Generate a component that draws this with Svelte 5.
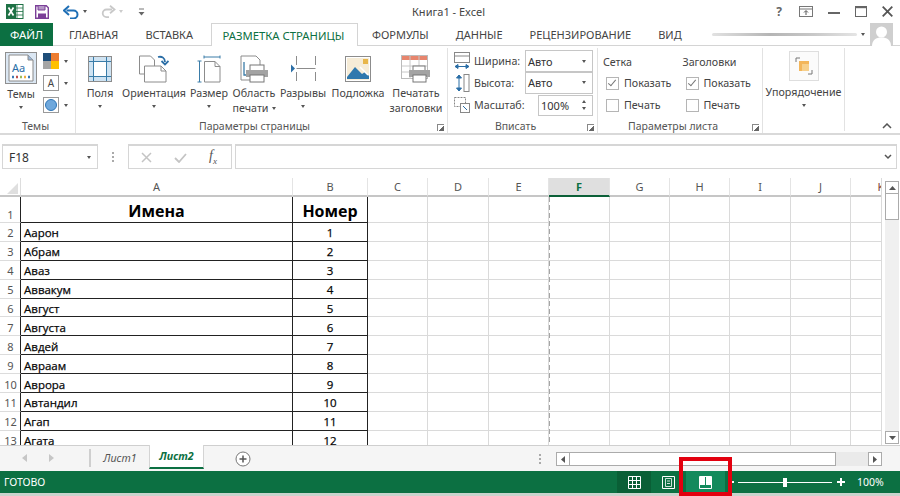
<script>
  const tabs = ['ГЛАВНАЯ', 'ВСТАВКА', 'РАЗМЕТКА СТРАНИЦЫ', 'ФОРМУЛЫ', 'ДАННЫЕ', 'РЕЦЕНЗИРОВАНИЕ', 'ВИД'];
  const pageItems = [
    { id: 'margins', w: 44, lines: ['Поля'], caret: 'below' },
    { id: 'orient', w: 64, lines: ['Ориентация'], caret: 'below' },
    { id: 'size', w: 46, lines: ['Размер'], caret: 'below' },
    { id: 'area', w: 44, lines: ['Область', 'печати'], caret: 'inline' },
    { id: 'breaks', w: 54, lines: ['Разрывы'], caret: 'below' },
    { id: 'bg', w: 56, lines: ['Подложка'], caret: '' },
    { id: 'titles', w: 60, lines: ['Печатать', 'заголовки'], caret: '' }
  ];
  const cols = ['A', 'B', 'C', 'D', 'E', 'F', 'G', 'H', 'I', 'J', 'K'];
  const names = ['Аарон', 'Абрам', 'Аваз', 'Аввакум', 'Август', 'Августа', 'Авдей', 'Авраам', 'Аврора', 'Автандил', 'Агап', 'Агата'];
  const emptyCols = cols.slice(2);
</script>

<div class="app">
  <header class="titlebar">
    <div class="qat">
      <svg class="q-excel" width="18" height="17" viewBox="0 0 18 17"><rect x="7" y="1.500" width="10" height="14" fill="#fff" stroke="#1e7145"/><path d="M11 2v13M7 5h10M7 8.500h10M7 12h10" stroke="#1e7145" stroke-width=".8"/><rect x="0" y="1" width="10" height="15" fill="#1e7145"/><path d="M2.500 4.500l5 8M7.500 4.500l-5 8" stroke="#fff" stroke-width="1.700"/></svg>
      <svg class="q-save" width="14" height="14" viewBox="0 0 14 14"><path d="M.7.700h10.600l2 2v10.600H.7z" fill="#fff" stroke="#7b3f98" stroke-width="1.400"/><path d="M3 1v4h7V1" fill="#b497c6" stroke="#7b3f98"/><rect x="3" y="8.500" width="8" height="4.500" fill="#7b3f98"/></svg>
      <svg class="q-undo" width="17" height="14" viewBox="0 0 17 14"><path d="M3.500 5.500h7a4 4 0 0 1 0 8H7" fill="none" stroke="#1f6fb5" stroke-width="2"/><path d="M6 1L1 5.500 6 10" fill="none" stroke="#1f6fb5" stroke-width="2"/></svg>
      <span class="caret q-c1"></span>
      <svg class="q-redo" width="15" height="13" viewBox="0 0 15 13"><path d="M11 4.500H5.500a3.800 3.800 0 0 0 0 7.600H8" fill="none" stroke="#c9c9c9" stroke-width="1.800"/><path d="M9 .8l4.500 3.700L9 8.200" fill="none" stroke="#c9c9c9" stroke-width="1.800"/></svg>
      <span class="caret light q-c2"></span>
      <svg class="q-more" width="7" height="8" viewBox="0 0 7 8"><path d="M1 1h5" stroke="#777"/><path d="M.5 4h6L3.500 7.500z" fill="#666"/></svg>
    </div>
    <div class="doc-title">Книга1 - Excel</div>
    <div class="winbtns">
      <span class="help">?</span>
      <svg width="14" height="11" viewBox="0 0 14 11"><rect x=".5" y=".5" width="13" height="10" fill="#fff" stroke="#777"/><path d="M.5 3h13" stroke="#777"/><path d="M7 9V5M5 6.500L7 4.500l2 2" fill="none" stroke="#555"/></svg>
      <svg width="12" height="11" viewBox="0 0 12 11"><path d="M0 7h12" stroke="#666" stroke-width="2"/></svg>
      <svg width="12" height="11" viewBox="0 0 12 11"><rect x=".5" y=".5" width="11" height="10" fill="none" stroke="#666"/><path d="M0 1.200h12" stroke="#666" stroke-width="2"/></svg>
      <svg width="11" height="11" viewBox="0 0 11 11"><path d="M.7.700l9.600 9.600M10.300.700L.7 10.300" stroke="#555" stroke-width="1.800"/></svg>
    </div>
  </header>

  <nav class="tabs">
    <div class="file">ФАЙЛ</div>
    <div class="tablist">
      {#each tabs as t, i}
        <div class="tab" class:active={i === 2}>{t}</div>
      {/each}
    </div>
    <div class="account">
      <span class="smudge"></span>
      <span class="caret"></span>
      <svg class="avatar" width="23" height="23" viewBox="0 0 23 23"><rect width="23" height="23" fill="#cfcfcf"/><circle cx="11.500" cy="9" r="5.500" fill="#fff"/><path d="M2 23c0-6 4-8.500 9.500-8.500S21 17 21 23z" fill="#fff"/></svg>
    </div>
  </nav>

  <section class="ribbon">
    <div class="group g-themes">
      <div class="g-body themes-body">
        <div class="themes-main">
          <div class="theme-box">
            <svg width="28" height="28" viewBox="0 0 28 28"><path d="M2 1h19l5 5v21H2z" fill="#fff" stroke="#8a8a8a"/><path d="M21 1v5h5" fill="#9bb7d8" stroke="#8a8a8a"/><text x="5" y="18" class="aa">Aa</text><path d="M5 23h2" stroke="#3b78b5" stroke-width="2.500"/><path d="M9 23h2" stroke="#c0504d" stroke-width="2.500"/><path d="M13 23h2" stroke="#9bbb59" stroke-width="2.500"/><path d="M17 23h2" stroke="#f0ad3c" stroke-width="2.500"/><path d="M21 23h2" stroke="#3b78b5" stroke-width="2.500"/></svg>
          </div>
          <span class="lbl">Темы</span>
          <span class="caret under"></span>
        </div>
        <div class="themes-side">
          <div class="side"><svg width="16" height="16" viewBox="0 0 16 16"><rect width="8" height="8" fill="#1f4e79"/><rect x="8" width="8" height="8" fill="#ed7d31"/><rect y="8" width="8" height="8" fill="#a5a5a5"/><rect x="8" y="8" width="8" height="8" fill="#ffc000"/></svg><span class="caret"></span></div>
          <div class="side"><span class="font-a">A</span><span class="caret"></span></div>
          <div class="side"><svg width="16" height="16" viewBox="0 0 16 16"><rect x=".5" y=".5" width="15" height="15" fill="#fff" stroke="#9a9a9a"/><circle cx="8" cy="8" r="5.500" fill="#6fa8dc" stroke="#2e75b6"/></svg><span class="caret"></span></div>
        </div>
      </div>
      <div class="g-label short">Темы</div>
    </div>

    <div class="group g-page">
      <div class="g-body page-body">
        {#each pageItems as it}
          <div class="big" style="width:{it.w}px">
            <div class="big-ico">
              {#if it.id === 'margins'}
                <svg width="24" height="26" viewBox="0 0 24 26"><rect x=".5" y=".5" width="23" height="25" fill="#fff" stroke="#8c8c8c"/><rect x="1" y="1" width="4" height="24" fill="#cfe3f2"/><rect x="19" y="1" width="4" height="24" fill="#cfe3f2"/><rect x="1" y="1" width="22" height="4" fill="#cfe3f2"/><rect x="1" y="21" width="22" height="4" fill="#cfe3f2"/><path d="M5.500 1v24M18.500 1v24M1 5.500h22M1 20.500h22" stroke="#3a7ca8"/></svg>
              {:else if it.id === 'orient'}
                <svg width="30" height="28" viewBox="0 0 30 28"><path d="M.5 1h11l4 4v14H.5z" fill="#fff" stroke="#8c8c8c"/><path d="M5.500 11H22l5 5v11H5.500z" fill="#fff" stroke="#8c8c8c"/><path d="M22 11v5h5" fill="none" stroke="#8c8c8c"/><path d="M19 2c4-1 7 1 7 5" fill="none" stroke="#2b6ea6" stroke-width="1.800"/><path d="M22.500 6l3.500 3.500L29.500 6" fill="none" stroke="#2b6ea6" stroke-width="1.800"/></svg>
              {:else if it.id === 'size'}
                <svg width="24" height="28" viewBox="0 0 24 28"><path d="M7 .5v3M23 .5v3M7 2h16" stroke="#3a7ca8"/><path d="M.5 6h4M.5 27h4M2.500 6v21" stroke="#3a7ca8"/><path d="M7.500 6.500H18l5 5v15.500H7.500z" fill="#fff" stroke="#8c8c8c"/><path d="M18 6.500v5h5" fill="none" stroke="#8c8c8c"/></svg>
              {:else if it.id === 'area'}
                <svg width="30" height="28" viewBox="0 0 30 28"><path d="M2 1h15l4 4v20H2z" fill="#fff" stroke="#8c8c8c"/><path d="M5 7v13h3" fill="none" stroke="#3a7ca8" stroke-width="1.300"/><rect x="11" y="10" width="14" height="6" fill="#fff" stroke="#777"/><rect x="7" y="15" width="22" height="7" fill="#a3a3a3"/><rect x="11" y="20" width="14" height="7" fill="#fff" stroke="#777"/></svg>
              {:else if it.id === 'breaks'}
                <svg width="26" height="27" viewBox="0 0 26 27"><path d="M6.500 1v9M6.500 17v9M25.500 1v9M25.500 17v9M6.500 13.500h19" fill="none" stroke="#8c8c8c"/><path d="M1 9.500l4 4-4 4z" fill="#2b6ea6"/></svg>
              {:else if it.id === 'bg'}
                <svg width="26" height="26" viewBox="0 0 26 26"><rect x=".5" y=".5" width="25" height="25" fill="#fff" stroke="#8c8c8c"/><rect x="2" y="2" width="22" height="22" fill="#f6ecd7"/><rect x="18" y="3" width="5" height="5" fill="#e8b64a"/><path d="M2 21l8-10 7 7 3-2 4 4v3H2z" fill="#2f78ad"/><path d="M15 11l8 8" stroke="#fff" stroke-width="1.500"/></svg>
              {:else}
                <svg width="30" height="28" viewBox="0 0 30 28"><rect x=".5" y=".5" width="26" height="23" fill="#fff" stroke="#bbb"/><rect x="1" y="1" width="25" height="4" fill="#e7856d"/><path d="M1 11h25M1 17h25M9 1v23M18 1v23" stroke="#c8c8c8"/><rect x="12" y="11" width="12" height="6" fill="#fff" stroke="#777"/><rect x="8" y="15" width="21" height="7" fill="#a3a3a3"/><rect x="12" y="20" width="13" height="7" fill="#fff" stroke="#777"/></svg>
              {/if}
            </div>
            <span class="lbl">{it.lines[0]}</span>
            {#if it.lines[1]}
              <span class="lbl second">{it.lines[1]}{#if it.caret === 'inline'}<span class="caret inline"></span>{/if}</span>
            {/if}
            {#if it.caret === 'below'}<span class="caret under"></span>{/if}
          </div>
        {/each}
      </div>
      <div class="g-label">Параметры страницы<i class="launcher"></i></div>
    </div>

    <div class="group g-fit">
      <div class="g-body fit-body">
        <div class="fit-row">
          <svg width="16" height="18" viewBox="0 0 16 18"><rect x=".5" y=".5" width="15" height="10" fill="#fff" stroke="#888"/><path d="M.5 4h15" stroke="#888"/><path d="M1 14.500h14M1 14.500l3-2v4zM15 14.500l-3-2v4z" fill="#2b6ea6" stroke="#2b6ea6"/></svg>
          <span class="fit-lbl">Ширина:</span>
          <div class="select">Авто<span class="caret"></span></div>
        </div>
        <div class="fit-row">
          <svg width="16" height="18" viewBox="0 0 16 18"><path d="M5 1v16M5 1L2.500 4h5zM5 17l-2.500-3h5z" fill="#2b6ea6" stroke="#2b6ea6"/><rect x="10" y=".5" width="5" height="17" fill="#fff" stroke="#888"/></svg>
          <span class="fit-lbl">Высота:</span>
          <div class="select">Авто<span class="caret"></span></div>
        </div>
        <div class="fit-row">
          <svg width="16" height="16" viewBox="0 0 16 16"><rect x=".5" y=".5" width="11" height="9" fill="#fff" stroke="#888" stroke-dasharray="2 1"/><rect x="6.500" y="6.500" width="9" height="9" fill="#fff" stroke="#888"/><path d="M9 9l4 4" stroke="#2b6ea6"/></svg>
          <span class="fit-lbl">Масштаб:</span>
          <div class="spin">100%<span class="arrows"><span class="up"></span><span class="caret"></span></span></div>
        </div>
      </div>
      <div class="g-label">Вписать<i class="launcher"></i></div>
    </div>

    <div class="group g-sheet">
      <div class="g-body sheet-body">
        <div class="opt-col">
          <div class="opt-title">Сетка</div>
          <div class="opt"><span class="check on"></span>Показать</div>
          <div class="opt"><span class="check"></span>Печать</div>
        </div>
        <div class="opt-col">
          <div class="opt-title">Заголовки</div>
          <div class="opt"><span class="check on"></span>Показать</div>
          <div class="opt"><span class="check"></span>Печать</div>
        </div>
      </div>
      <div class="g-label">Параметры листа<i class="launcher"></i></div>
    </div>

    <div class="group g-arrange">
      <div class="arrange-ico">
        <svg width="18" height="18" viewBox="0 0 18 18"><path d="M1 5V1h4M13 17h4v-4" fill="none" stroke="#777"/><rect x="4" y="4" width="10" height="10" fill="#f3b65b"/><rect x="7" y="7" width="7" height="7" fill="#f7d08c"/></svg>
      </div>
      <span class="lbl">Упорядочение</span>
      <span class="caret under"></span>
    </div>

    <svg class="collapse" width="10" height="6" viewBox="0 0 10 6"><path d="M1 5l4-4 4 4" fill="none" stroke="#555" stroke-width="1.500"/></svg>
  </section>

  <section class="fxbar">
    <div class="namebox">F18<span class="caret"></span></div>
    <span class="vdots"></span>
    <div class="fxbtns">
      <svg width="11" height="11" viewBox="0 0 11 11"><path d="M1 1l9 9M10 1l-9 9" stroke="#c4c4c4" stroke-width="1.500"/></svg>
      <svg width="13" height="11" viewBox="0 0 13 11"><path d="M1 6l4 4 7-8" fill="none" stroke="#c4c4c4" stroke-width="1.800"/></svg>
      <span class="fx">f<sub>x</sub></span>
    </div>
    <div class="fxinput"><svg width="8" height="6" viewBox="0 0 8 6"><path d="M1 1l3 3 3-3" fill="none" stroke="#555" stroke-width="1.500"/></svg></div>
  </section>

  <section class="sheetarea">
    <div class="sheet">
      <div class="corner"><i></i></div>
      {#each cols as c}
        <div class="ch" class:sel={c === 'F'} class:cut={c === 'K'}>{c}</div>
      {/each}
      <div class="rh tall">1</div>
      <div class="c a head">Имена</div>
      <div class="c b head">Номер</div>
      {#each emptyCols as c}<div class="c"></div>{/each}
      {#each names as n, i}
        <div class="rh">{i + 2}</div>
        <div class="c a">{n}</div>
        <div class="c b">{i + 1}</div>
        {#each emptyCols as c}<div class="c"></div>{/each}
      {/each}
      <span class="pagebreak"></span>
    </div>
    <aside class="vscroll">
      <div class="sb-btn"><svg width="7" height="4" viewBox="0 0 7 4"><path d="M0 4l3.500-4L7 4z" fill="#555"/></svg></div>
      <div class="sb-thumb"></div>
      <div class="sb-track"></div>
      <div class="sb-btn"><svg width="7" height="4" viewBox="0 0 7 4"><path d="M0 0l3.500 4L7 0z" fill="#555"/></svg></div>
    </aside>
  </section>

  <section class="sheettabs">
    <div class="nav-arrows">
      <svg width="5" height="8" viewBox="0 0 5 8"><path d="M5 0L0 4l5 4z" fill="#c6c6c6"/></svg>
      <svg width="5" height="8" viewBox="0 0 5 8"><path d="M0 0l5 4-5 4z" fill="#c6c6c6"/></svg>
    </div>
    <div class="stab first">Лист1</div>
    <div class="stab on">Лист2</div>
    <svg class="addsheet" width="16" height="16" viewBox="0 0 16 16"><circle cx="8" cy="8" r="7" fill="#fff" stroke="#777"/><path d="M8 4.500v7M4.500 8h7" stroke="#555" stroke-width="1.500"/></svg>
    <span class="vdots tabdots"></span>
    <div class="hscroll">
      <div class="hb"><svg width="4" height="7" viewBox="0 0 4 7"><path d="M4 0L0 3.500 4 7z" fill="#555"/></svg></div>
      <div class="hthumb"></div>
      <div class="htrack"></div>
      <div class="hb"><svg width="4" height="7" viewBox="0 0 4 7"><path d="M0 0l4 3.500L0 7z" fill="#555"/></svg></div>
    </div>
  </section>

  <footer class="status">
    <span class="ready">ГОТОВО</span>
    <div class="views">
      <div class="vbtn normal"><svg width="13" height="13" viewBox="0 0 13 13"><path d="M.5.500h12v12H.5zM4.500.500v12M8.500.500v12M.5 4.500h12M.5 8.500h12" fill="none" stroke="#fff"/></svg></div>
      <div class="vbtn layout"><svg width="13" height="13" viewBox="0 0 13 13"><path d="M.5.500h12v12H.5z" fill="none" stroke="#fff"/><path d="M3.500 2.500h6v8h-6zM5 5h3M5 7.500h3" fill="none" stroke="#fff" stroke-width=".8"/></svg></div>
      <div class="vbtn pb"><svg width="13" height="13" viewBox="0 0 13 13"><path d="M.5.500h12v12H.5z" fill="none" stroke="#fff"/><rect x="1" y="1" width="5" height="8" fill="#fff"/><rect x="7" y="1" width="5" height="8" fill="#fff"/></svg></div>
    </div>
    <div class="zoomer">
      <span class="zminus"></span>
      <div class="zline"><i></i></div>
      <svg width="8" height="8" viewBox="0 0 8 8"><path d="M4 0v8M0 4h8" stroke="#fff" stroke-width="2"/></svg>
      <span class="zpct">100%</span>
    </div>
  </footer>
  <div class="bottomstrip"></div>
  <div class="redmark"></div>
</div>

<style>
  :global(body) { margin: 0; background: #fff; }
  .app {
    position: relative; width: 900px; height: 496px; overflow: hidden; background: #fff;
    display: flex; flex-direction: column;
    font-family: "Noto Sans", "Open Sans", sans-serif; font-size: 11px; color: #444;
  }
  .caret { display: inline-block; width: 0; height: 0; border-left: 2.500px solid transparent; border-right: 2.500px solid transparent; border-top: 3px solid #555; }
  .caret.light { border-top-color: #ccc; }
  .titlebar { height: 23px; display: flex; align-items: center; position: relative; flex: none; }
  .qat { display: flex; align-items: center; padding-left: 6px; }
  .q-save { margin-left: 11px; }
  .q-undo { margin-left: 14px; }
  .q-c1 { margin-left: 3px; }
  .q-redo { margin-left: 14px; }
  .q-c2 { margin-left: 3px; }
  .q-more { margin-left: 15px; }
  .doc-title { position: absolute; left: 412px; font-size: 11px; color: #444; }
  .winbtns { margin-left: auto; display: flex; align-items: center; gap: 15px; padding-right: 7px; }
  .help { font-weight: 700; font-size: 12px; color: #666; margin-right: 2px; }
  .tabs { height: 23px; display: flex; flex: none; border-bottom: 1px solid #d4d4d4; box-sizing: border-box; }
  .file { width: 53px; background: #0c7042; color: #fff; display: flex; align-items: center; justify-content: center; font-size: 11.500px; height: 23px; }
  .tablist { display: flex; height: 23px; }
  .tab { padding: 0 13.500px; display: flex; align-items: center; font-size: 11px; color: #444; box-sizing: border-box; }
  .tab:first-child { padding-left: 16px; padding-right: 13.500px; }
  .tab.active { color: #0c7042; background: #fff; border: 1px solid #d4d4d4; border-bottom: none; padding: 0 13px 0 11px; margin-left: 4px; font-size: 11.300px; }
  .account { margin-left: auto; display: flex; align-items: center; padding-right: 7px; }
  .smudge { width: 145px; height: 3px; background: linear-gradient(90deg, #e2e2e2, #b5b5b5 40%, #c8c8c8 70%, #e5e5e5); border-radius: 2px; margin-right: 4px; }
  .avatar { margin-left: 5px; }

  .ribbon { height: 89px; flex: none; display: flex; position: relative; border-bottom: 2px solid #d9d9d9; box-sizing: border-box; }
  .group { display: flex; flex-direction: column; border-right: 1px solid #e2e2e2; margin-top: 2px; box-sizing: border-box; }
  .g-body { flex: 1; display: flex; min-height: 0; }
  .g-label { height: 14px; position: relative; text-align: center; font-size: 10.500px; color: #555; line-height: 14px; padding-right: 14px; }
  .g-label.short { padding-right: 4px; }
  .launcher { position: absolute; right: 3px; bottom: 2px; width: 6px; height: 6px; border-left: 1px solid #888; border-top: 1px solid #888; background: linear-gradient(135deg, transparent 55%, #666 55%); }
  .lbl { font-size: 10.700px; line-height: 14px; color: #444; white-space: nowrap; }
  .caret.under { margin-top: 5px; }
  .caret.inline { margin-left: 3px; vertical-align: 2px; }
  .g-themes { width: 76px; }
  .themes-body { padding-left: 5px; }
  .themes-main { width: 38px; display: flex; flex-direction: column; align-items: center; padding-right: 6px; box-sizing: border-box; }
  .theme-box { width: 32px; height: 32px; border: 1px solid #8f8f8f; background: #dbe7f3; display: flex; align-items: center; justify-content: center; margin: 4px 0 3px; box-sizing: border-box; }
  .aa { font: 11px "Noto Sans", sans-serif; fill: #2b6ea6; }
  .themes-side { display: flex; flex-direction: column; gap: 6px; padding-top: 5px; }
  .side { display: flex; align-items: center; gap: 5px; height: 16px; }
  .font-a { width: 14px; height: 14px; border: 1px solid #999; font-size: 10px; display: flex; align-items: center; justify-content: center; color: #444; }
  .g-page { width: 372px; }
  .page-body { padding-left: 2px; }
  .big { display: flex; flex-direction: column; align-items: center; }
  .big-ico { height: 31px; margin-top: 5px; margin-bottom: 2px; display: flex; align-items: center; }
  .lbl.second { margin-top: 1px; }
  .g-fit { width: 150px; }
  .fit-body { flex-direction: column; padding: 2px 4px 0 6px; }
  .fit-row { height: 22px; display: flex; align-items: center; }
  .fit-row svg { flex: none; width: 16px; }
  .fit-lbl { margin-left: 4px; font-size: 10.700px; flex: 1; white-space: nowrap; }
  .select, .spin { box-sizing: border-box; height: 22px; border: 1px solid #c6c6c6; background: #fff; display: flex; align-items: center; justify-content: space-between; padding: 0 6px 0 2px; color: #333; font-size: 11px; }
  .select { width: 68px; }
  .fit-row + .fit-row .select { margin-top: -1px; }
  .spin { width: 55px; height: 21px; }
  .arrows { display: flex; flex-direction: column; gap: 4px; }
  .up { width: 0; height: 0; border-left: 2.500px solid transparent; border-right: 2.500px solid transparent; border-bottom: 3px solid #555; }
  .g-sheet { width: 165px; }
  .sheet-body { padding-left: 5px; }
  .opt-col { width: 82px; }
  .opt-title { font-size: 10.700px; height: 24px; line-height: 28px; color: #444; }
  .opt { height: 22px; margin-left: 3px; display: flex; align-items: center; gap: 5px; font-size: 10.700px; }
  .check { width: 11px; height: 11px; border: 1px solid #b5b5b5; background: #fff; position: relative; flex: none; }
  .check.on::after { content: ""; position: absolute; left: 3px; top: 0; width: 3px; height: 7px; border-right: 1px solid #777; border-bottom: 1px solid #777; transform: rotate(40deg); }
  .g-arrange { width: 82px; align-items: center; margin-bottom: 2px; }
  .arrange-ico { width: 28px; height: 28px; border: 1px solid #dedede; display: flex; align-items: center; justify-content: center; margin-top: 3px; margin-bottom: 4px; background: #fbfbfb; }
  .collapse { position: absolute; right: 8px; bottom: 4px; }

  .fxbar { flex: none; margin-top: 9px; height: 25px; display: flex; align-items: stretch; padding: 0 3px 0 2px; }
  .namebox { width: 96px; box-sizing: border-box; border: 1px solid #d6d6d6; border-top-width: 2px; display: flex; align-items: center; justify-content: space-between; padding: 0 6px; color: #333; font-size: 12px; }
  .vdots { width: 2px; height: 10px; align-self: center; margin: 0 14px; background: repeating-linear-gradient(#aaa 0 2px, transparent 2px 4px); }
  .fxbtns { width: 104px; box-sizing: border-box; border: 1px solid #d6d6d6; border-top-width: 2px; display: flex; align-items: center; gap: 22px; padding-left: 12px; }
  .fx { font-family: "Liberation Serif", serif; font-style: italic; font-size: 14px; color: #555; line-height: 1; }
  .fx sub { font-size: 9px; }
  .fxinput { flex: 1; margin-left: 3px; box-sizing: border-box; border: 1px solid #d6d6d6; border-top-width: 2px; display: flex; align-items: center; justify-content: flex-end; padding-right: 4px; }

  .sheetarea { flex: none; margin-top: 9px; height: 267px; display: flex; overflow: hidden; }
  .sheet {
    position: relative; flex: 1; min-width: 0; display: grid; overflow: hidden; align-content: start;
    grid-template-columns: 21px 272px 75px 60px 61px 60px 61px 60px 60px 61px 60px 61px;
    grid-template-rows: 19px 26px repeat(13, 18.900px);
    border-right: 1px solid #dadada;
  }
  .corner { border-bottom: 2px solid #c6c6c6; border-right: 1px solid #ddd; position: relative; box-sizing: border-box; }
  .corner i { position: absolute; right: 2px; bottom: 1px; width: 0; height: 0; border-left: 11px solid transparent; border-bottom: 11px solid #dfdfdf; }
  .ch { box-sizing: border-box; border-bottom: 2px solid #c6c6c6; border-right: 1px solid #e4e4e4; display: flex; align-items: center; justify-content: center; font-size: 11px; color: #555; }
  .ch.sel { background: #dfdfdf; color: #0c7042; font-weight: 700; border-bottom-color: #0c6038; }
  .ch.cut { color: #7a3b3b; }
  .rh { box-sizing: border-box; border-right: 1px solid #222; border-bottom: 1px solid #dcdcdc; display: flex; align-items: center; justify-content: center; font-size: 11px; color: #555; padding: 2px 0 0 1px; }
  .rh.tall { align-items: flex-end; padding: 0 0 0 1px; }
  .c { box-sizing: border-box; border-right: 1px solid #dadada; border-bottom: 1px solid #dadada; font-size: 11.500px; color: #111; font-family: "Open Sans", "Noto Sans", sans-serif; }
  .c.a, .c.b { border-right-color: #222; border-bottom-color: #222; display: flex; align-items: center; padding-top: 2px; -webkit-text-stroke: 0.25px #111; color: #000; }
  .c.a { padding-left: 3px; }
  .c.b { justify-content: center; }
  .c.head { font-size: 16px; font-weight: 700; justify-content: center; padding: 3px 0 0; color: #000; -webkit-text-stroke: 0; }
  .pagebreak { position: absolute; left: 549px; top: 19px; bottom: 0; width: 1px; background: repeating-linear-gradient(#a5a5a5 0 5px, transparent 5px 8px); }
  .vscroll { width: 18px; flex: none; display: flex; flex-direction: column; padding: 3px 1px 1px 3px; box-sizing: border-box; background: #fff; }
  .sb-btn { height: 13px; flex: none; border: 1px solid #ababab; background: #fff; display: flex; align-items: center; justify-content: center; box-sizing: border-box; }
  .sb-thumb { height: 26px; flex: none; border: 1px solid #ababab; border-top: none; background: #fff; box-sizing: border-box; }
  .sb-track { flex: 1; background: #f0f0f0; }

  .sheettabs { flex: none; height: 26px; display: flex; align-items: flex-start; border-top: 1px solid #cfcfcf; background: #f5f5f5; box-sizing: border-box; position: relative; }
  .nav-arrows { width: 91px; height: 18px; display: flex; align-items: center; gap: 22px; padding-left: 22px; box-sizing: border-box; border-right: 2px solid #cfcfcf; margin-top: 3px; }
  .stab { width: 55px; display: flex; align-items: center; justify-content: center; font-size: 10.700px; font-style: italic; color: #555; height: 23px; box-sizing: border-box; }
  .stab.first { width: 58px; }
  .stab.on { background: #fff; color: #0c7042; font-weight: 700; border-bottom: 2px solid #0c7042; border-left: 1px solid #d4d4d4; border-right: 1px solid #d4d4d4; margin-top: -1px; height: 24px; }
  .addsheet { align-self: center; margin-left: 31px; }
  .tabdots { margin: 0 0 0 288px; }
  .hscroll { position: absolute; left: 556px; top: 6px; width: 326px; height: 14px; display: flex; }
  .hb { width: 14px; box-sizing: border-box; border: 1px solid #ababab; background: #fff; display: flex; align-items: center; justify-content: center; }
  .hthumb { width: 266px; box-sizing: border-box; border: 1px solid #ababab; border-left: none; background: #fff; }
  .htrack { flex: 1; background: #eaeaea; }

  .status { flex: none; height: 22px; background: #0c7042; color: #fff; display: flex; align-items: center; font-size: 10.500px; position: relative; }
  .ready { padding-left: 4px; }
  .views { position: absolute; left: 617px; top: 0; height: 22px; display: flex; }
  .vbtn { display: flex; align-items: center; justify-content: center; height: 22px; }
  .vbtn.normal { width: 34px; background: #0a5f36; }
  .vbtn.layout { width: 35px; }
  .vbtn.pb { width: 39px; background: #138a5c; }
  .zoomer { position: absolute; left: 730px; top: 0; height: 22px; width: 170px; display: flex; align-items: center; }
  .zminus { width: 4px; height: 2px; background: #fff; }
  .zline { width: 94px; height: 1px; background: #fff; margin: 0 5px 0 4px; position: relative; }
  .zline i { position: absolute; left: 45px; top: -4px; width: 4px; height: 9px; background: #fff; }
  .zpct { margin-left: 12px; font-size: 10.500px; }
  .bottomstrip { flex: 1; background: #c8d4cc; }
  .redmark { position: absolute; left: 679px; top: 457px; width: 53px; height: 39px; box-sizing: border-box; border: 4px solid #e3000f; }
</style>
